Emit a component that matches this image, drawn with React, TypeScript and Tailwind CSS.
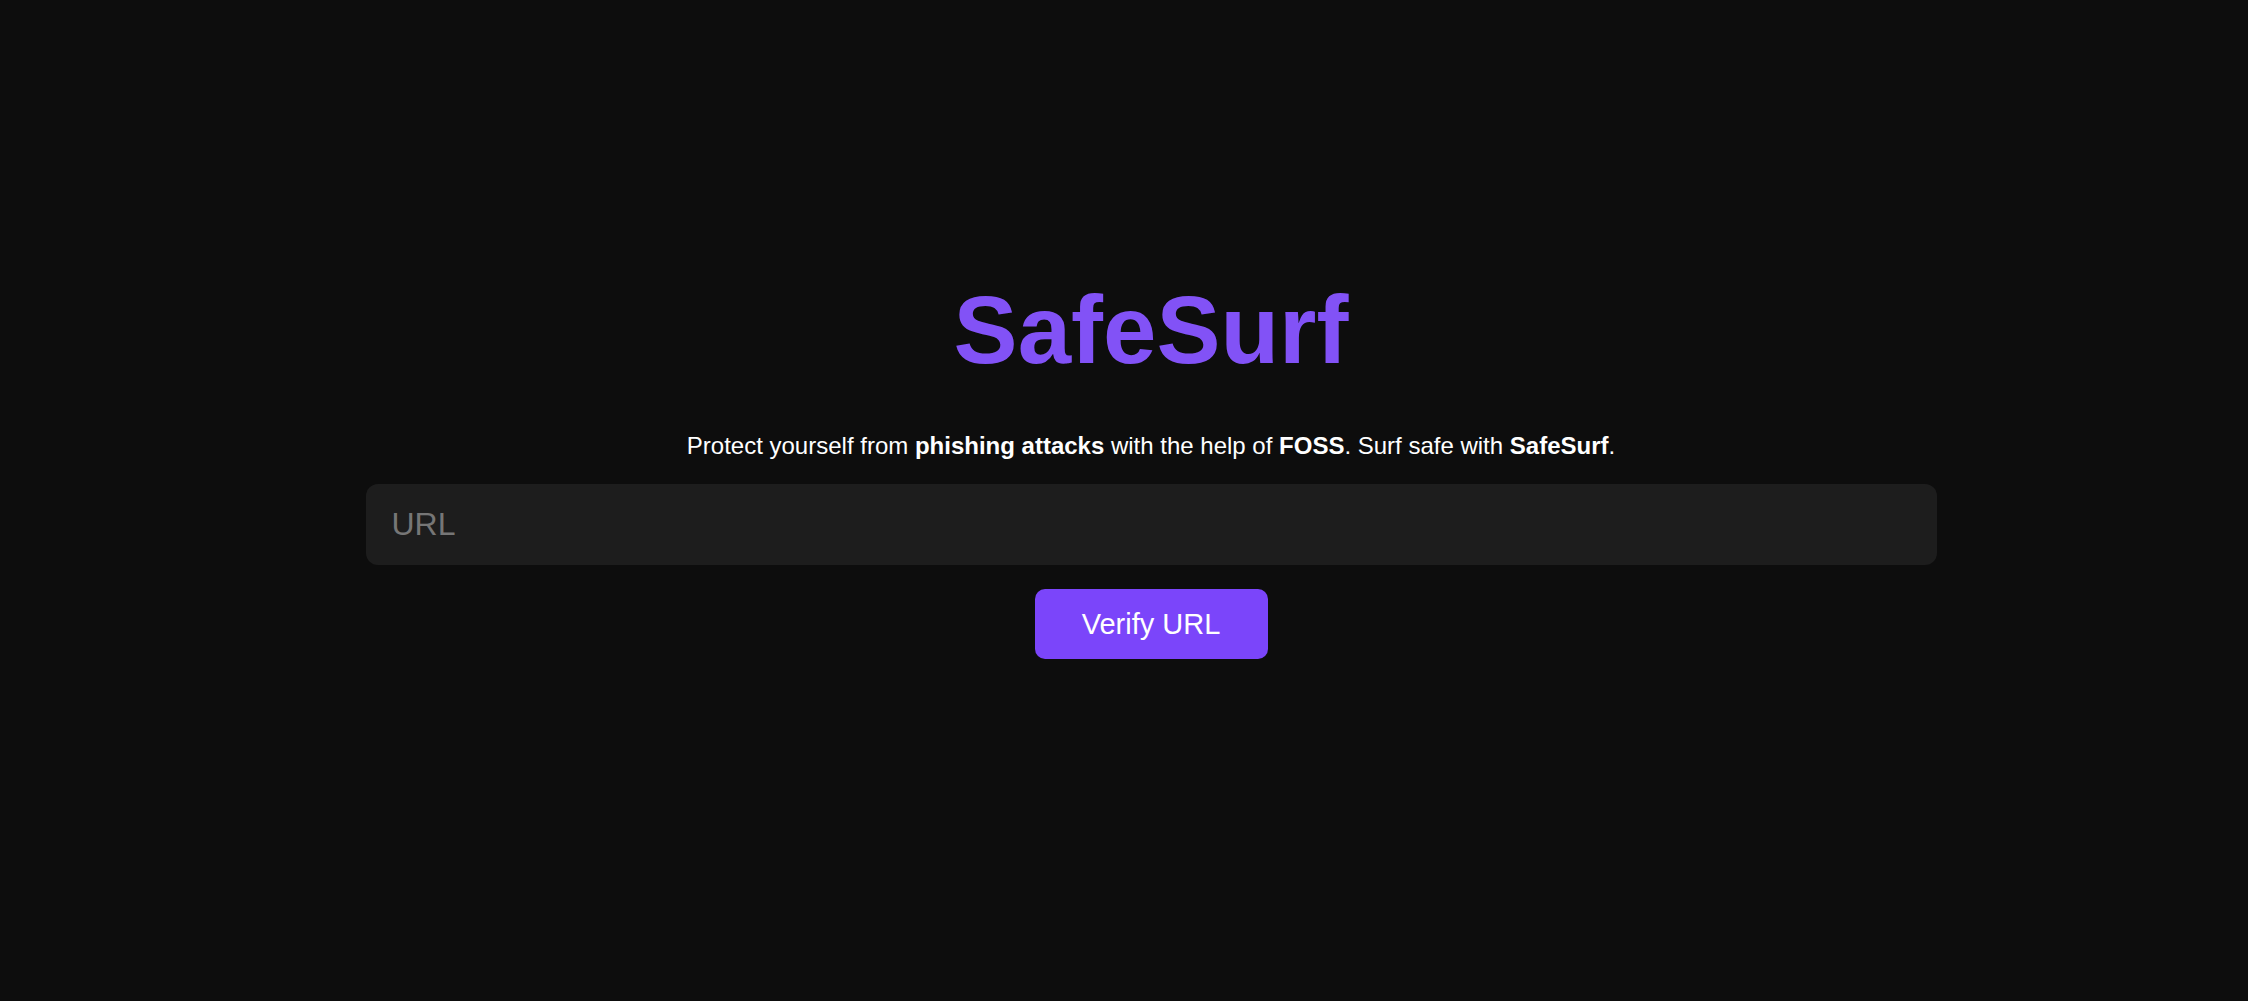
import { useState } from "react";

export default function App() {
  const [url, setUrl] = useState("");

  return (
    <div className="min-h-screen bg-[#0d0d0d] font-['Liberation_Sans',Arial,sans-serif] text-white">
      <div className="flex flex-col items-center pl-[54px] pt-[282px]">
        <h1 className="text-[96px] font-bold leading-none text-[#8252f6]">
          SafeSurf
        </h1>
        <p className="mt-[51px] text-[24px] leading-[33px]">
          Protect yourself from <b>phishing attacks</b> with the help of{" "}
          <b>FOSS</b>. Surf safe with <b>SafeSurf</b>.
        </p>
        <input
          type="text"
          value={url}
          onChange={(e) => setUrl(e.target.value)}
          placeholder="URL"
          className="mt-[22px] h-[81px] w-[1571px] rounded-xl bg-[#1d1d1d] px-[26px] text-[32px] text-white placeholder:text-[#767676] outline-none"
        />
        <button className="mt-[24px] h-[70px] w-[233px] rounded-[10px] bg-[#7b45fa] pt-[2px] text-[29px] text-white">
          Verify URL
        </button>
      </div>
    </div>
  );
}
